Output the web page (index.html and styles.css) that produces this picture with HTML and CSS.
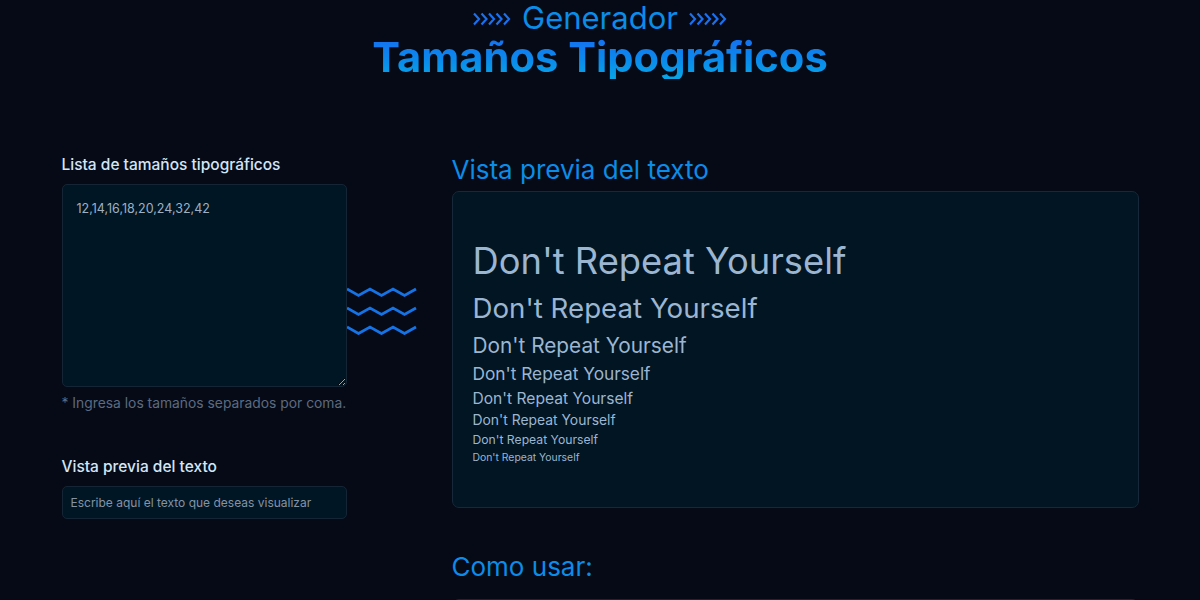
FILE: index.html
```html
<!DOCTYPE html>
<html lang="es">
<head>
<meta charset="utf-8">
<title>Generador Tamaños Tipográficos</title>
<link rel="stylesheet" href="styles.css">
</head>
<body>
<header class="hero">
  <div class="subtitle">
    <svg class="chev" width="38" height="14" viewBox="0 0 38 14"><path d="M1 1.5 L6 7 L1 12.5 M8.5 1.5 L13.5 7 L8.5 12.5 M16 1.5 L21 7 L16 12.5 M23.5 1.5 L28.5 7 L23.5 12.5 M31 1.5 L36 7 L31 12.5" fill="none" stroke="#1a70ee" stroke-width="2.2"/></svg>
    <span class="sub-text">Generador</span>
    <svg class="chev" width="38" height="14" viewBox="0 0 38 14"><path d="M1 1.5 L6 7 L1 12.5 M8.5 1.5 L13.5 7 L8.5 12.5 M16 1.5 L21 7 L16 12.5 M23.5 1.5 L28.5 7 L23.5 12.5 M31 1.5 L36 7 L31 12.5" fill="none" stroke="#1a70ee" stroke-width="2.2"/></svg>
  </div>
  <h1 class="title">Tamaños Tipográficos</h1>
</header>

<main class="layout">
  <section class="controls">
    <label class="label" for="sizes">Lista de tamaños tipográficos</label>
    <textarea id="sizes" class="textarea">12,14,16,18,20,24,32,42</textarea>
    <p class="hint">* Ingresa los tamaños separados por coma.</p>
    <label class="label label-second" for="txt">Vista previa del texto</label>
    <input id="txt" class="input" type="text" placeholder="Escribe aquí el texto que deseas visualizar">
  </section>

  <div class="connector">
    <svg width="72" height="50" viewBox="0 0 72 50">
      <path d="M0 4 L11.5 10.5 L23 4 L34.5 10.5 L46 4 L57.5 10.5 L69 4" fill="none" stroke="#1673e6" stroke-width="2.8"/>
      <path d="M0 23 L11.5 29.5 L23 23 L34.5 29.5 L46 23 L57.5 29.5 L69 23" fill="none" stroke="#1673e6" stroke-width="2.8"/>
      <path d="M0 42 L11.5 48.5 L23 42 L34.5 48.5 L46 42 L57.5 48.5 L69 42" fill="none" stroke="#1673e6" stroke-width="2.8"/>
    </svg>
  </div>

  <section class="output">
    <h2 class="heading">Vista previa del texto</h2>
    <div class="preview">
      <p class="line s42">Don't Repeat Yourself</p>
      <p class="line s32">Don't Repeat Yourself</p>
      <p class="line s24">Don't Repeat Yourself</p>
      <p class="line s20">Don't Repeat Yourself</p>
      <p class="line s18">Don't Repeat Yourself</p>
      <p class="line s16">Don't Repeat Yourself</p>
      <p class="line s14">Don't Repeat Yourself</p>
      <p class="line s12">Don't Repeat Yourself</p>
    </div>
    <h2 class="heading heading-usage">Como usar:</h2>
    <div class="usage"></div>
  </section>
</main>
</body>
</html>
```

FILE: styles.css
```css
html, body {
  margin: 0;
  padding: 0;
  height: 100%;
}
body {
  background: #050a16;
  font-family: Inter, "Noto Sans", sans-serif;
  color: #c9dcef;
  overflow: hidden;
}

.hero {
  text-align: center;
  padding-top: 0;
}
.subtitle {
  display: flex;
  justify-content: center;
  align-items: center;
  gap: 11px;
  height: 35px;
}
.sub-text {
  font-size: 31px;
  line-height: 35px;
  color: #0b8ce8;
  font-weight: 400;
}
.chev {
  display: block;
  margin-top: 2px;
}
.title {
  margin: 0;
  font-size: 41.7px;
  line-height: 44px;
  font-weight: 700;
  background: linear-gradient(180deg, #176cf0 0%, #0a8cec 60%, #07a6e6 100%);
  -webkit-background-clip: text;
  background-clip: text;
  color: transparent;
}

.layout {
  width: 1077px;
  margin: 75px auto 0;
  display: grid;
  grid-template-columns: 285px 105px 1fr;
}

.controls {
  display: flex;
  flex-direction: column;
}
.label {
  font-size: 15.5px;
  line-height: 22px;
  font-weight: 500;
  color: #d3e5f6;
}
.label-second {
  margin-top: 42px;
}
.textarea {
  margin-top: 8px;
  height: 203px;
  box-sizing: border-box;
  padding: 15px 14px;
  background: #011624;
  border: 1px solid #142536;
  border-radius: 5px;
  color: #9fb0c2;
  font-family: Inter, sans-serif;
  font-size: 12.5px;
  line-height: 18px;
  resize: vertical;
  outline: none;
}
.hint {
  margin: 6px 0 0;
  font-size: 13.85px;
  line-height: 21px;
  color: #5c6b80;
  white-space: nowrap;
}
.input {
  margin-top: 8px;
  height: 33px;
  box-sizing: border-box;
  padding: 0 8px;
  background: #011624;
  border: 1px solid #142536;
  border-radius: 5px;
  color: #9fb0c2;
  font-family: Inter, sans-serif;
  font-size: 12px;
  outline: none;
}
.input::placeholder {
  color: #8393a6;
}

.connector {
  padding-top: 131px;
}
.connector svg {
  display: block;
}

.output {
  display: flex;
  flex-direction: column;
}
.heading {
  margin: 0;
  font-size: 26px;
  line-height: 31px;
  font-weight: 400;
  color: #0b8ce8;
}
.heading-usage {
  margin-top: 43px;
}
.preview {
  margin-top: 6px;
  box-sizing: border-box;
  height: 317px;
  padding: 0 20px;
  display: flex;
  flex-direction: column;
  justify-content: center;
  background: #011522;
  border: 1px solid #16283a;
  border-radius: 7px;
}
.line {
  margin: 0;
  line-height: 1.5;
  color: #9cb6d2;
  white-space: nowrap;
}
.s42 { font-size: 36.3px; }
.s32 { font-size: 27.7px; }
.s24 { font-size: 20.8px; }
.s20 { font-size: 17.3px; }
.s18 { font-size: 15.6px; }
.s16 { font-size: 13.9px; }
.s14 { font-size: 12.2px; }
.s12 { font-size: 10.4px; }

.usage {
  margin-top: 17px;
  height: 200px;
  background: #011522;
  border: 1px solid #16283a;
  border-radius: 7px;
}
```
